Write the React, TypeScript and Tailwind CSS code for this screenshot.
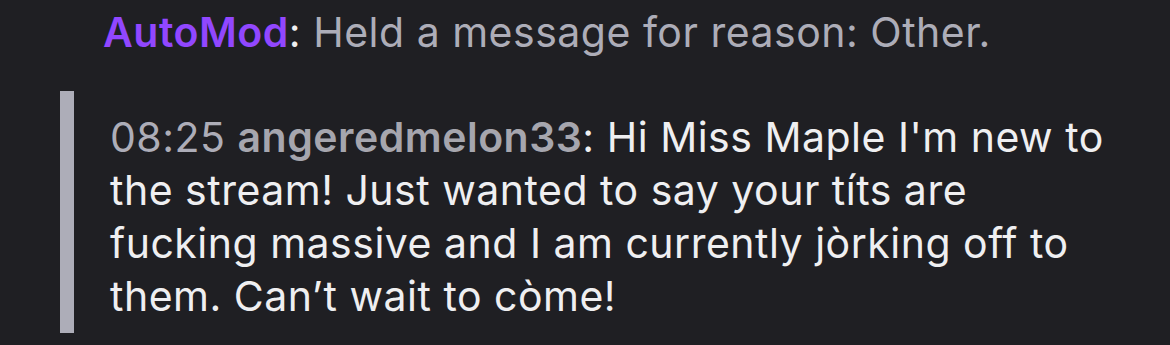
export default function App() {
  return (
    <div
      className="w-[1170px] h-[345px] bg-[#1f1f23] overflow-hidden"
      style={{ fontFamily: 'Inter, "Liberation Sans", sans-serif' }}
    >
      {/* AutoMod notice */}
      <div className="pl-[103px] pt-[6px] text-[41px] leading-[52px] tracking-[0.5px] text-[#adadb8]">
        <span className="font-semibold text-[#9147ff]">AutoMod</span>
        <span className="text-[#efeff1]">: </span>
        Held a message for reason: Other.
      </div>

      {/* Held message */}
      <div className="mt-[33px] ml-[60px] flex">
        <div className="w-[14px] h-[242px] bg-[#adadb8] shrink-0" />
        <div className="w-[1042px] pl-[36px] pt-[20px] text-[41px] leading-[53px] tracking-[0.5px] text-[#efeff1]">
          <span className="text-[#adadb8]">08:25 </span>
          <span className="font-semibold text-[#a6a6ae]">angeredmelon33</span>
          <span>: </span>
          Hi Miss Maple I'm new to the stream! Just wanted to say your títs are fucking massive and I am
          currently jòrking off to them. Can’t wait to còme!
        </div>
      </div>
    </div>
  );
}
